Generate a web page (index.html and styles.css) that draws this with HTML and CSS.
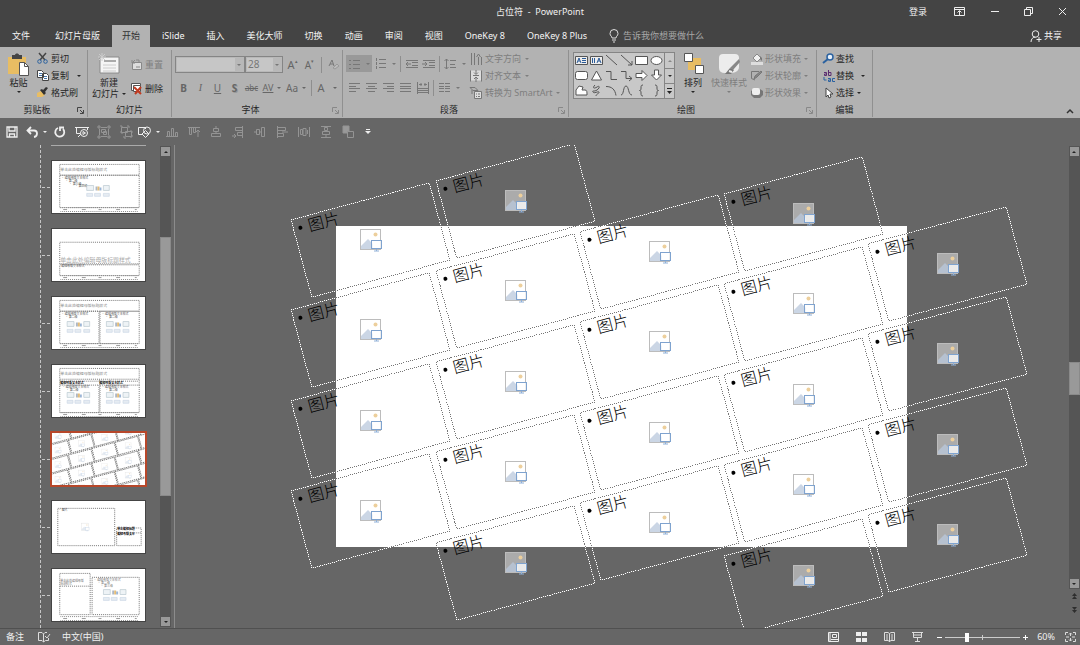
FILE: index.html
```html
<!DOCTYPE html>
<html lang="zh-CN">
<head>
<meta charset="utf-8">
<title>占位符 - PowerPoint</title>
<link rel="stylesheet" href="styles.css">
</head>
<body>
<svg class="defs" aria-hidden="true">
  <symbol id="pic" viewBox="0 0 24 24">
    <rect x="1.500" y="1.500" width="20" height="20" fill="#fff" fill-opacity=".45" stroke="#bcbcbc"/>
    <circle cx="16.500" cy="6.500" r="2" fill="#edcf9c"/>
    <path d="M2 21v-3l7-7 5 5v5z" fill="#b9c8dc" fill-opacity=".75"/>
    <rect x="12.500" y="12.500" width="10" height="8" fill="#fff" fill-opacity=".75" stroke="#7fa3cf"/>
    <path d="M17.500 21v2M15 23h5" stroke="#8fb0d8" fill="none"/>
  </symbol>
  <symbol id="launch" viewBox="0 0 7 7"><path d="M.5 5V.5H5M3 3l3 3M6.500 3v3.500H3" fill="none" stroke="currentColor"/></symbol>
  <symbol id="content" viewBox="0 0 26 14">
    <path d="M1 1h7v5H1zM18 1h6v5h-6z" fill="#eef3f6" stroke="#b8c8ce" stroke-width=".7"/>
    <path d="M10 2h2v4h-2z" fill="#adb7c5"/><path d="M12 2h2v4h-2z" fill="#e5bd77"/><path d="M14 3h2v3h-2z" fill="#9bb5d6"/>
    <path d="M1 9h6v3H1zM9 9h6v3H9zM18 9h6v3h-6z" fill="#e6ecf2" stroke="#ccd8e6" stroke-width=".7"/>
  </symbol>
  <symbol id="foot" viewBox="0 0 80 5"><path d="M0 .5h80M0 4.500h80" stroke="#888" stroke-dasharray="1 1" fill="none"/><path d="M3 2.500h4M22 2.500h4M39 2.500h3M57 2.500h4M76 2.500h2" stroke="#999"/></symbol>
</svg>
<div class="app">
  <header class="titlebar">
    <h1 class="doc-title">占位符&nbsp; -&nbsp; PowerPoint</h1>
    <div class="window-tools">
      <button class="signin">登录</button>
      <button aria-label="功能区显示选项"><svg width="11" height="9" fill="none" stroke="#eee"><path d="M.5.5h10v8H.5zM1 2.500h9M5.500 8V4M3.500 5.500l2-2 2 2"/></svg></button>
      <button aria-label="最小化"><svg width="9" height="9" stroke="#eee"><path d="M1 4.500h8"/></svg></button>
      <button aria-label="还原"><svg width="9" height="9" fill="none" stroke="#eee"><path d="M.5 2.500h6v6h-6zM2.500 2V.5h6v6H7"/></svg></button>
      <button aria-label="关闭"><svg width="9" height="9" stroke="#eee"><path d="M1 1l7 7M8 1L1 8"/></svg></button>
    </div>
  </header>
  <nav class="tabs">
    <button class="tab file">文件</button><button class="tab">幻灯片母版</button><button class="tab active">开始</button><button class="tab">iSlide</button><button class="tab">插入</button><button class="tab">美化大师</button><button class="tab">切换</button><button class="tab">动画</button><button class="tab">审阅</button><button class="tab">视图</button><button class="tab">OneKey 8</button><button class="tab">OneKey 8 Plus</button>
    <button class="tell"><svg width="10" height="14" fill="none" stroke="#ddd"><path d="M3 9C3 7 1 7 1 4.500a4 4 0 0 1 8 0C9 7 7 7 7 9zM3 11h4M4 13h2"/></svg>告诉我你想要做什么</button>
    <button class="share"><svg width="12" height="12" fill="none" stroke="#eee"><circle cx="5.500" cy="4" r="3.300"/><path d="M1 12c0-3 2-5 4.500-5M9 7v5M6.500 9.500h5"/></svg>共享</button>
  </nav>

  <section class="ribbon">
    <div class="group clip">
      <div class="body">
        <button class="big"><svg width="22" height="24"><path d="M0 4h18v17H0z" fill="#e8bd63"/><path d="M4 2h3c0-2 4-2 4 0h3v4H4z" fill="#444"/><path d="M11.500 9.500h5l4 4v9h-9z" fill="#fff" stroke="#555"/><path d="M16.500 9.500v4h4" fill="none" stroke="#555"/></svg><span>粘贴</span><i class="caret"></i></button>
        <div class="rows">
          <button class="item"><svg width="11" height="11" fill="none"><path d="M2 0l6 7M9 0L3 7" stroke="#444" stroke-width="1.500"/><circle cx="2.500" cy="8.500" r="1.800" stroke="#2b62a0"/><circle cx="8.500" cy="8.500" r="1.800" stroke="#2b62a0"/></svg>剪切</button>
          <button class="item"><svg width="11" height="11" fill="#fff" stroke="#444"><path d="M.5.5h4l2 2v5h-6zM5.500 3.500h4l2 2v5h-6z"/><path d="M2 3.500h3M2 5.500h3M7 6.500h3M7 8.500h3" stroke="#4775a8"/></svg>复制<i class="caret far"></i></button>
          <button class="item"><svg width="11" height="11"><path d="M0 6l4-2 4 4-3 2H0z" fill="#e8bd63"/><path d="M3 3l2-1 1 1 3-3 2 1-3 4 1 1-2 2z" fill="#333"/></svg>格式刷</button>
        </div>
      </div>
      <footer class="caption has"><span>剪贴板</span><button aria-label="剪贴板选项" class="launcher"><svg width="7" height="7"><use href="#launch"/></svg></button></footer>
    </div>
    <div class="group slides">
      <div class="body">
        <button class="big"><svg width="22" height="21"><path d="M2 4h19v16H2z" fill="#f5f5f5" stroke="#8a8a8a"/><path d="M6 8h12" stroke="#aaa" stroke-width="2"/><path d="M5 12h13M5 15h13M5 18h13" stroke="#ccc"/><path d="M4 0v8M0 4h8M1 1l6 6M7 1L1 7" stroke="#ccc"/></svg><span>新建</span><span class="line">幻灯片<i class="caret"></i></span></button>
        <div class="rows two">
          <button class="item off"><svg width="11" height="11" fill="#ddd" stroke="#888"><path d="M1.500 3.500h9v7h-9z"/><path d="M5 8h4M1 4l3-3M1 1v3h3M5 1h3v2" fill="none"/></svg>重置</button>
          <button class="item"><svg width="11" height="12" fill="#fff" stroke="#555"><path d="M.5.5h9v7h-9z"/><path d="M2.500 2.500h7v6h-7z"/><path d="M3 4l7 7M10 4l-6 7" stroke="#c03a20" stroke-width="2"/></svg>删除</button>
        </div>
      </div>
      <footer class="caption"><span>幻灯片</span></footer>
    </div>
    <div class="group font">
      <div class="body stack">
        <div class="strip">
          <button class="combo name" aria-label="字体"><span class="value"></span><i class="caret"></i></button><button class="combo size" aria-label="字号"><span class="value">28</span><i class="caret"></i></button>
          <button class="glyph grow">A<sup>▴</sup></button><button class="glyph shrink">A<sup>▾</sup></button><i class="bar"></i>
          <button class="glyph" aria-label="清除格式"><svg width="12" height="12" fill="none" stroke="#777"><path d="M1 7l3-6 2 6M2 5h3"/><path d="M5 9l4-4 2 2-4 3z" fill="#bbb" stroke="#999"/></svg></button>
        </div>
        <div class="strip marks">
          <button class="glyph b">B</button><button class="glyph i">I</button><button class="glyph u">U</button><button class="glyph s">S</button><button class="glyph st">abc</button>
          <button class="glyph av">AV<i class="caret"></i></button><button class="glyph aa">Aa<i class="caret"></i></button><i class="bar"></i><button class="glyph color">A<i class="caret"></i></button>
        </div>
      </div>
      <footer class="caption has"><span>字体</span><button aria-label="字体选项" class="launcher off"><svg width="7" height="7"><use href="#launch"/></svg></button></footer>
    </div>
    <div class="group para">
      <div class="body">
        <div class="stack">
          <div class="strip">
            <button class="tool chosen" aria-label="项目符号"><svg width="11" height="10" stroke="#777"><path d="M0 1.500h2M4 1.500h7M0 5.500h2M4 5.500h7M0 9.500h2M4 9.500h7"/></svg><i class="caret"></i></button>
            <button class="tool wide" aria-label="编号"><svg width="11" height="11" stroke="#777"><path d="M1.500 0v3M4 1.500h7M1.500 4v3M4 5.500h7M1.500 8v3M4 9.500h7"/></svg><i class="caret"></i></button><i class="bar"></i>
            <button class="tool" aria-label="减少缩进"><svg width="13" height="10" stroke="#777" fill="none"><path d="M1 1.500h12M7 3.500h6M7 6.500h6M1 8.500h12M6 5H1M3 3L1 5l2 2"/></svg></button>
            <button class="tool" aria-label="增加缩进"><svg width="13" height="10" stroke="#777" fill="none"><path d="M1 1.500h12M7 3.500h6M7 6.500h6M1 8.500h12M0 5h5M3 3l2 2-2 2"/></svg></button><i class="bar"></i>
            <button class="tool wide" aria-label="行距"><svg width="12" height="12" stroke="#777" fill="none"><path d="M2.500 1v10M.5 3l2-2 2 2M.5 9l2 2 2-2M6 2.500h6M6 6.500h5M6 9.500h6"/></svg><i class="caret"></i></button>
          </div>
          <div class="strip">
            <button class="tool" aria-label="左对齐"><svg width="11" height="9" stroke="#777"><path d="M0 .5h11M0 3.500h7M0 5.500h11M0 8.500h7"/></svg></button>
            <button class="tool" aria-label="居中"><svg width="11" height="9" stroke="#777"><path d="M0 .5h11M2 3.500h7M0 5.500h11M2 8.500h7"/></svg></button>
            <button class="tool" aria-label="右对齐"><svg width="11" height="9" stroke="#777"><path d="M0 .5h11M4 3.500h7M0 5.500h11M4 8.500h7"/></svg></button>
            <button class="tool" aria-label="两端对齐"><svg width="11" height="9" stroke="#777"><path d="M0 .5h11M0 3.500h11M0 5.500h11M0 8.500h11"/></svg></button>
            <button class="tool" aria-label="分散对齐"><svg width="12" height="12" stroke="#777" fill="none"><path d="M.5 0v12M11.500 0v12M2 2.500h3M7 2.500h3M4 1v3M8 1v3M1 6.500h10M1 8.500h10M1 10.500h10"/></svg></button><i class="bar"></i>
            <button class="tool wide" aria-label="分栏"><svg width="11" height="9" stroke="#777"><path d="M0 .5h5M6 .5h5M0 3.500h5M6 3.500h5M0 5.500h5M6 5.500h5M0 8.500h5M6 8.500h5"/></svg><i class="caret"></i></button>
          </div>
        </div>
        <div class="rows">
          <button class="item off"><svg width="12" height="12" fill="none" stroke="#777"><path d="M1.500 0v12M4.500 0v12M8.500 4v8M6.500 4l2-3 2 3M11.500 4v8"/></svg>文字方向<i class="caret"></i></button>
          <button class="item off"><svg width="12" height="12" fill="none" stroke="#777"><path d="M1 .5h10v10H1z" fill="#ddd" stroke="none"/><path d="M.5.5v11M11.500.5v11M3 5.500h6M6 0v4M4 2.500l2 2 2-2M6 12V7M4 9l2-2 2 2"/></svg>对齐文本<i class="caret"></i></button>
          <button class="item off"><svg width="12" height="12" fill="none" stroke="#777"><path d="M0 .5h5l3 3H3zM2 3v4"/><path d="M4.500 4.500h7v7h-7z" fill="#ddd"/><path d="M6 7h1M8 7h2M6 9.500h1M8 9.500h2"/></svg>转换为 SmartArt<i class="caret"></i></button>
        </div>
      </div>
      <footer class="caption has"><span>段落</span><button aria-label="段落选项" class="launcher off"><svg width="7" height="7"><use href="#launch"/></svg></button></footer>
    </div>
    <div class="group draw">
      <div class="body">
        <div class="gallery">
          <div class="shapes">
            <svg width="13" height="13"><path d="M.5 2.500h12v8H.5z" fill="#eee" stroke="#555"/><path d="M2 9l2-5 2 5M3 7h2M7 4.500h4M7 6.500h4M7 8.500h4" fill="none" stroke="#2b5b98"/></svg>
            <svg width="13" height="13"><path d="M.5 2.500h12v8H.5z" fill="#eee" stroke="#555"/><path d="M7 9l2-5 2 5M8 7h2M2.500 4v5M4.500 4v5" fill="none" stroke="#2b5b98"/></svg>
            <svg width="13" height="13"><path d="M1 1l11 10"/></svg>
            <svg width="13" height="13"><path d="M1 1l11 10M8 11h4V7"/></svg>
            <svg width="13" height="13"><path class="w" d="M.5 2.500h12v8H.5z"/></svg>
            <svg width="13" height="13"><ellipse class="w" cx="6.500" cy="6.500" rx="5.500" ry="4"/></svg>
            <svg width="13" height="13"><rect class="w" x=".5" y="2.500" width="12" height="8" rx="2"/></svg>
            <svg width="13" height="13"><path class="w" d="M6.500 2l5 9h-10z"/></svg>
            <svg width="13" height="13"><path d="M1 2.500h5v8h6"/></svg>
            <svg width="13" height="13"><path d="M1 2.500h5v7h6M9 7l3 2.500-3 2.500"/></svg>
            <svg width="13" height="13"><path class="w" d="M1 4.500h6v-3l5 5-5 5v-3H1z"/></svg>
            <svg width="13" height="13"><path class="w" d="M4.500 1h4v5h3l-5 5-5-5h3z"/></svg>
            <svg width="13" height="13"><path class="w" d="M1 11V6l3-4 4 1-1 3h3c2 0 2 2 2 5z"/></svg>
            <svg width="13" height="13"><path d="M5 1C2 4 4 5 7 3s3 1 0 3-5 0-4 2 5-1 6 0-3 2-3 4"/></svg>
            <svg width="13" height="13"><path d="M1 2.500c6 0 9 3 10 9"/></svg>
            <svg width="13" height="13"><path d="M1 11c3 0 2-9 5-9s2 9 6 9"/></svg>
            <svg width="13" height="13"><path d="M8 1c-2 0-2 1-2 3s0 2-1.500 2.500c1.500.5 1.500.5 1.500 2.500s0 3 2 3"/></svg>
            <svg width="13" height="13"><path d="M5 1c2 0 2 1 2 3s0 2 1.500 2.500c-1.500.5-1.500.5-1.500 2.500s0 3-2 3"/></svg>
          </div>
          <div class="spin"><button aria-label="上一行"><i class="caret up dim"></i></button><button aria-label="下一行"><i class="caret"></i></button><button aria-label="更多形状"><svg width="5" height="6"><path d="M0 .5h5" stroke="#222"/><path d="M0 3h5L2.500 6z" fill="#222"/></svg></button></div>
        </div>
        <button class="big arrange"><svg width="21" height="22"><path d="M5 5h13v12H5z" fill="#e8bd63"/><path d="M1.500.5h8v8h-8zM12.500 12.500h8v8h-8z" fill="#fff" stroke="#555"/></svg><span>排列</span><i class="caret"></i></button>
        <button class="big style off"><svg width="22" height="22"><path d="M5 1h12q4 0 4 4v9q0 5-7 6H7q-6 0-6-5V5q0-4 4-4z" fill="#ececec"/><path d="M21 6l1 3-7 8-3-2z" fill="#888"/><path d="M7 21l5-6 4 2-3 4z" fill="#777"/><path d="M11 18l3 1" stroke="#eee" stroke-width="2"/></svg><span>快速样式</span><i class="caret"></i></button>
        <div class="rows">
          <button class="item off"><svg width="12" height="12"><path d="M2 5l4-4 4 4-4 4z" fill="#f0f0f0" stroke="#888"/><path d="M9 3l2 2v3l-2-2z" fill="#777"/><path d="M0 9h12v3H0z" fill="#ddd"/></svg>形状填充<i class="caret"></i></button>
          <button class="item off"><svg width="12" height="12" fill="none" stroke="#777"><path d="M8 1.500H.5v7L4 10"/><path d="M3 9l1-3 6-5 1 1-5 5z" fill="#888"/></svg>形状轮廓<i class="caret"></i></button>
          <button class="item off"><svg width="12" height="12"><path d="M3 2h6l3 2v4l-3 3H3L0 8V4z" fill="#777"/><rect x="1" y="1" width="8" height="7" rx="2" fill="#eee"/></svg>形状效果<i class="caret"></i></button>
        </div>
      </div>
      <footer class="caption has"><span>绘图</span><button aria-label="绘图选项" class="launcher off"><svg width="7" height="7"><use href="#launch"/></svg></button></footer>
    </div>
    <div class="group edit">
      <div class="body">
        <div class="rows">
          <button class="item"><svg width="11" height="11" fill="none"><circle cx="7" cy="4" r="3" fill="#e8f1fa" stroke="#2b62a0" stroke-width="1.500"/><path d="M5 6l-5 4" stroke="#2b62a0" stroke-width="2"/></svg>查找</button>
          <button class="item"><svg width="11" height="12" fill="none" stroke="#5b2c70"><path d="M3.500 5.500V2.500H1M3.500 4H1.500v1.500h2M5.500 0v5.500h2.500v-3H5.500"/><path d="M7.500 11.500v-3H5M7.500 10H5.500v1.500h2M12 8.500H9.500v3H12M1 7v3h2.500" stroke="#2b62a0"/></svg>替换<i class="caret far"></i></button>
          <button class="item"><svg width="11" height="12"><path d="M3 1v9l2-2 1 3 2-1-1-3h3z" fill="#fff" stroke="#444"/></svg>选择<i class="caret"></i></button>
        </div>
      </div>
      <footer class="caption"><span>编辑</span></footer>
    </div>
    <button class="collapse" aria-label="折叠功能区"><svg width="8" height="5" fill="none" stroke="#333" stroke-width="1.500"><path d="M1 4l3-3 3 3"/></svg></button>
  </section>

  <div class="quick">
    <button aria-label="保存"><svg width="12" height="12" fill="none" stroke="#eee"><path d="M1 1h10v10H1zM3 1v4h6V1M3.500 11V8h5v3" stroke-width="1.300"/></svg></button>
    <button class="w26" aria-label="撤消"><svg width="13" height="12" fill="none" stroke="#eee" stroke-width="1.800"><path d="M5 1L1.500 4.500 5 8M2 4.500h6c4 0 4 6 0 6.500"/></svg><i class="caret"></i></button>
    <button aria-label="重复"><svg width="12" height="12" fill="none" stroke="#eee" stroke-width="1.800"><path d="M4 2a4.500 4.500 0 1 0 5 1M6 5V1.500h4"/></svg></button>
    <button aria-label="放映"><svg width="14" height="12" fill="none" stroke="#eee"><path d="M0 1.500h14M1.500 2v5.500H5M3 11l3-3M12.500 2v2"/><circle cx="9" cy="7" r="3.500"/><path d="M8 5.500v3l2.500-1.500z"/></svg></button>
    <button class="dim" aria-label="组合"><svg width="12" height="12" fill="none"><path d="M1.500 3v6M10.500 3v6M3 1.500h6M3 10.500h6M0 0h2v2H0zM10 0h2v2h-2zM0 10h2v2H0zM10 10h2v2h-2zM3.500 3.500h4v3h-4zM5.500 5.500h3v3h-3z"/></svg></button>
    <button class="dim" aria-label="取消组合"><svg width="13" height="12" fill="none"><path d="M1.500 1.500h6v5h-6zM5.500 5.500h6v5h-6zM0 0h2v2M7 0h2v2M0 6h2v2M11 4v2h2M4 10v2h2M11 12v-2h2"/></svg></button>
    <button class="w24" aria-label="形状"><svg width="14" height="12" fill="none" stroke="#eee"><path d="M4 8.500H.5v-7h7V3"/><circle cx="9" cy="4.500" r="3.500"/><path d="M7.500 4.500l3.500 3.500-3.500 3.500L4 8z"/></svg><i class="caret"></i></button>
    <button class="dim" aria-label="底端对齐"><svg width="12" height="12" fill="none"><path d="M0 10.500h12M1.500 5.500h2v5h-2zM5.500 2.500h2v8h-2zM9.500 6.500h2v4h-2z"/></svg></button>
    <button class="dim" aria-label="顶端对齐"><svg width="12" height="12" fill="none"><path d="M0 1.500h12M1.500 1.500h2v7h-2zM5.500 1.500h2v5h-2zM10 11V4M8 6l2-2 2 2"/></svg></button>
    <button class="dim" aria-label="水平居中"><svg width="12" height="12" fill="none"><path d="M3.500 2.500h5v3h-5zM1.500 7.500h9v3h-9zM6 0v2M6 5v2"/></svg></button>
    <button class="dim" aria-label="右对齐"><svg width="12" height="12" fill="none"><path d="M10.500 0v12M3.500 1.500h7v3h-7zM5.500 6.500h5v3h-5zM0 10h4M2 8l2 2-2 2"/></svg></button>
    <button class="dim" aria-label="垂直居中"><svg width="12" height="12" fill="none"><path d="M0 6h2M6 6h1M2.500 3.500h3v5h-3zM7.500 1.500h3v9h-3z"/></svg></button>
    <button class="dim" aria-label="左对齐"><svg width="12" height="12" fill="none"><path d="M1.500 0v12M1.500 1.500h8v3h-8zM1.500 7.500h6v3h-6zM12 6H6"/></svg></button>
    <button class="dim" aria-label="横向分布"><svg width="12" height="12" fill="none"><path d="M.5 1v10M11.500 1v10M2.500 3.500h2v5h-2zM5 2.500h3v7H5zM9.500 4v4"/></svg></button>
    <button class="dim" aria-label="纵向分布"><svg width="12" height="12" fill="none"><path d="M1 .5h10M1 11.500h10M4.500 1.500h3v3h-3zM2.500 5.500h7v3h-7zM6 8v3"/></svg></button>
    <button class="dim" aria-label="下移一层"><svg width="13" height="12"><path d="M1 0h6v7H1z" fill="#999"/><path d="M5.500 5.500h6v6h-6z" fill="#666"/></svg></button>
    <button class="last" aria-label="自定义快速访问工具栏"><svg width="6" height="6"><path d="M1 .5h4" stroke="#eee"/><path d="M0 2h6L3 5z" fill="#eee"/></svg></button>
  </div>

  <main class="main">
    <aside class="panel">
      <div class="thumbs" id="thumbs">
        <button class="thumb tail" aria-label="版式"></button>
        <button class="thumb"><svg viewBox="0 0 94 53"><rect class="d" x="7.500" y="3.500" width="81" height="11"/><rect class="d" x="7.500" y="14.500" width="81" height="33"/><text x="8" y="10" class="t4">单击此处编辑母版标题样式</text><text x="9" y="18" class="t2">• 编辑母版文本样式</text><text x="13" y="21" class="t2">• 第二级</text><text x="17" y="24" class="t2">• 第三级</text><text x="23" y="27" class="t2">• 第四级</text><use href="#content" x="34" y="24" width="26" height="14"/><use href="#foot" x="8" y="47" width="80" height="5"/></svg></button>
        <button class="thumb"><svg viewBox="0 0 94 53"><rect class="d" x="7.500" y="13.500" width="81" height="22"/><rect class="d" x="7.500" y="36.500" width="81" height="11"/><text x="8" y="34" class="t6">单击此处编辑母版标题样式</text><text x="9" y="39" class="t2">编辑母版文本样式</text><use href="#foot" x="8" y="47" width="80" height="5"/></svg></button>
        <button class="thumb"><svg viewBox="0 0 94 53"><rect class="d" x="7.500" y="3.500" width="81" height="11"/><rect class="d" x="7.500" y="14.500" width="40" height="33"/><rect class="d" x="48.500" y="14.500" width="40" height="33"/><text x="8" y="10" class="t4">单击此处编辑母版标题样式</text><text x="9" y="18" class="t2">• 编辑母版文本样式</text><text x="13" y="21" class="t2">• 第二级</text><text x="50" y="18" class="t2">• 编辑母版文本样式</text><text x="54" y="21" class="t2">• 第二级</text><use href="#content" x="14" y="24" width="26" height="14"/><use href="#content" x="54" y="24" width="26" height="14"/><use href="#foot" x="8" y="47" width="80" height="5"/></svg></button>
        <button class="thumb"><svg viewBox="0 0 94 53"><rect class="d" x="7.500" y="3.500" width="81" height="11"/><rect class="d" x="7.500" y="20.500" width="40" height="28"/><rect class="d" x="48.500" y="20.500" width="40" height="28"/><path class="d" d="M7.500 15v6M88.500 15v6M48 15v6M8 16.500h80"/><text x="8" y="10" class="t4">单击此处编辑母版标题样式</text><text x="8" y="19" class="t2 k">编辑母版文本样式</text><text x="48" y="19" class="t2 k">编辑母版文本样式</text><text x="10" y="23" class="t2">• 编辑母版文本样式</text><text x="14" y="27" class="t2">• 第二级</text><text x="50" y="23" class="t2">• 编辑母版文本样式</text><text x="54" y="27" class="t2">• 第二级</text><use href="#content" x="14" y="27" width="26" height="14"/><use href="#content" x="54" y="27" width="26" height="14"/><use href="#foot" x="8" y="48" width="80" height="5"/></svg></button>
        <button class="thumb picked" aria-label="图片版式"><svg viewBox="0 0 571 321" id="mini"></svg></button>
        <button class="thumb"><svg viewBox="0 0 94 53"><rect class="d" x="5.500" y="7.500" width="58" height="38"/><rect class="d" x="65.500" y="27.500" width="25" height="18"/><path class="d" d="M65 32.500h26"/><text x="6" y="10" class="t2">• 图片</text><use href="#pic" x="29" y="22" width="9" height="9" opacity=".5"/><text x="66" y="30" class="t3 k">单击编辑标题</text><text x="66" y="35" class="t2 k">编辑母版文本</text></svg></button>
        <button class="thumb"><svg viewBox="0 0 94 53"><path class="d" d="M7.500 4.500h31v42h-31zM8 17.500h31M40.500 8.500h48v38h-48z"/><text x="8" y="13" class="t3">单击此处编辑母版</text><text x="8" y="16" class="t3">标题样式</text><text x="42" y="12" class="t3">• 编辑母版文本样式</text><text x="46" y="15" class="t3">• 第二级</text><text x="49" y="18" class="t3">• 第三级</text><use href="#content" x="51" y="20" width="26" height="14"/><use href="#foot" x="8" y="48" width="80" height="5"/></svg></button>
      </div>
      <div class="scroll"><button aria-label="向上"><i class="caret up"></i></button><div class="track left"><div class="grip"></div></div><button aria-label="向下"><i class="caret"></i></button></div>
    </aside>
    <section class="workspace"><div class="slide" id="slide"></div></section>
    <div class="rail">
      <div class="scroll"><button aria-label="向上"><i class="caret up"></i></button><div class="track right"><div class="grip"></div></div><button aria-label="向下"><i class="caret"></i></button></div>
      <button class="page" aria-label="上一张"><svg width="5" height="6" fill="#2e2e2e"><path d="M0 3l2.500-3L5 3zM0 6l2.500-3L5 6z"/></svg></button>
      <button class="page" aria-label="下一张"><svg width="5" height="6" fill="#2e2e2e"><path d="M0 0h5L2.500 3zM0 3h5L2.500 6z"/></svg></button>
    </div>
  </main>

  <footer class="status">
    <button class="note">备注</button>
    <button class="spell" aria-label="拼写检查"><svg width="12" height="11" fill="none" stroke="#ddd"><path d="M5.500 10V2L4 .5H.5v8H4L5.500 10l2-1.500h3V6M5.500 2L7 .5h2M7 4l2 2 3-4"/></svg></button>
    <button>中文(中国)</button>
    <div class="views">
      <button aria-label="普通视图"><svg width="11" height="10" fill="none" stroke="#eee"><path d="M.5.5h10v9H.5zM2 1v8" /><path d="M4.500 2.500h4v3h-4zM3 7.500h7"/></svg></button>
      <button aria-label="幻灯片浏览"><svg width="11" height="10" fill="#eee"><path d="M0 0h5v4H0zM6 0h5v4H6zM0 6h5v4H0zM6 6h5v4H6z"/></svg></button>
      <button aria-label="阅读视图"><svg width="11" height="10" fill="none" stroke="#ddd"><path d="M5.500 10V1.500L4 .5H.5v8H4l1.500 1 1.500-1h3.500v-8H7l-1.500 1M2 3h2M2 5h2M2 7h2M7 3h2M7 5h2M7 7h2"/></svg></button>
      <button aria-label="幻灯片放映"><svg width="11" height="10" fill="none" stroke="#ddd"><path d="M0 .5h11M1.500 1v4.500h8V1M5.500 6v3M3 9.500h5M2 3h7"/></svg></button>
    </div>
    <button class="sign" aria-label="缩小"><svg width="5" height="5" stroke="#fff"><path d="M0 2.500h5"/></svg></button>
    <input class="zoom" type="range" min="0" max="100" value="28" aria-label="缩放">
    <button class="sign" aria-label="放大"><svg width="5" height="5" stroke="#fff"><path d="M0 2.500h5M2.500 0v5"/></svg></button>
    <button class="percent">60%</button>
    <button class="fit" aria-label="适应窗口"><svg width="11" height="10" fill="none" stroke="#ddd"><path d="M.5 3V.5H3M8 .5h2.500V3M10.500 7v2.500H8M3 9.500H.5V7M5.500 1v3M4 2.500L5.500 1 7 2.500M5.500 9V6M4 7.500L5.500 9 7 7.500M1 5h3M10 5H7"/></svg></button>
  </footer>
</div>
<script src="canvas.js"></script>
</body>
</html>
```
FILE: styles.css
```css
* { box-sizing: border-box; }
body { margin: 0; background: #666; color: #262626; font: 9px/12px "Noto Sans", "Noto Sans CJK SC", sans-serif; }
button { display: flex; align-items: center; justify-content: center; flex: none; margin: 0; padding: 0; border: 0; background: none; color: inherit; font: inherit; white-space: nowrap; }
svg { display: block; flex: none; overflow: visible; }
.defs { position: absolute; width: 0; height: 0; }
.app { display: flex; flex-direction: column; height: 100vh; }
.caret { flex: none; width: 0; height: 0; border: 2px solid transparent; border-top-color: currentColor; border-bottom-width: 0; }
.caret.up { border-top-width: 0; border-bottom: 2px solid currentColor; }
.caret.dim { opacity: .4; }

.titlebar { display: grid; grid-template-columns: 1fr auto 1fr; align-items: center; height: 23px; background: #444; color: #f0f0f0; }
.doc-title { grid-column: 2; margin: 0; font: inherit; }
.window-tools { display: flex; justify-content: flex-end; align-items: center; gap: 25px; padding-right: 13px; }
.window-tools .signin { margin-right: 2px; }

.tabs { display: flex; align-items: stretch; gap: 2px; height: 24px; padding: 2px 18px 0 2px; background: #444; color: #f4f4f4; }
.tab { padding: 0 10px; }
.tab.file { margin-right: 3px; }
.tab.active { background: #b2b2b2; color: #333; }
.tell { gap: 4px; margin-left: 10px; color: #a8a8a8; }
.share { gap: 2px; margin-left: auto; }

.ribbon { display: flex; height: 71px; padding: 3px 6px 1px 0; background: #b2b2b2; }
.group { display: flex; flex-direction: column; flex: none; border-right: 1px solid #909090; }
.body { display: flex; align-items: flex-start; flex: 1; }
.caption { display: flex; align-items: center; justify-content: center; position: relative; height: 14px; }
.caption.has { padding-right: 13px; }
.launcher { position: absolute; right: 3px; top: 4px; color: #444; }
.launcher.off { color: #888; }
.off { color: #7e7e7e; }
.big { flex-direction: column; justify-content: flex-start; padding-top: 3px; line-height: 11px; }
.big span { margin-top: 2px; }
.big .caret { margin-top: 3px; }
.big .line { display: flex; align-items: center; gap: 3px; margin-top: 0; }
.big .line .caret { margin-top: 0; }
.rows { display: flex; flex-direction: column; }
.item { justify-content: flex-start; gap: 3px; height: 17px; }
.item .caret { margin-left: 1px; }
.item .caret.far { margin-left: 5px; }
.rows.two { gap: 7px; padding-top: 6px; }
.strip { display: flex; align-items: center; height: 17px; }
.stack { display: flex; flex-direction: column; align-items: stretch; gap: 6px; }
.bar { width: 1px; height: 16px; background: #8e8e8e; }

.clip { width: 88px; }
.clip .body { gap: 7px; padding-left: 7px; }
.clip .big { width: 23px; }
.clip .big span { margin-top: 0; }
.slides { width: 84px; }
.slides .body { gap: 4px; padding-left: 3px; }
.slides .big { width: 36px; }
.slides .big span:first-of-type { margin-top: 3px; }

.font { width: 171px; }
.font .body { padding: 6px 0 0 3px; }
.combo { justify-content: space-between; height: 17px; padding: 1px 3px 1px 1px; border: 1px solid #858585; background: #b8b8b8; color: #777; }
.combo .value { height: 13px; padding-left: 1px; background: #c6c6c6; text-align: left; }
.combo.name { width: 70px; }
.combo.name .value { width: 58px; }
.combo.size { width: 38px; }
.combo.size .value { width: 26px; font-size: 10px; }
.glyph { width: 17px; color: #666; font-size: 10px; }
.glyph sup { font-size: 5px; line-height: 5px; align-self: flex-start; }
.glyph.grow { margin-left: 1px; font-size: 11px; }
.font .bar { margin: 0 3px; }
.b { font-weight: 700; }
.i { font-family: "Liberation Serif", serif; font-style: italic; }
.u { text-decoration: underline; }
.s { font-weight: 700; text-shadow: 1px 1px #999; }
.st { font-size: 8px; text-decoration: line-through; }
.av, .aa { width: 24px; gap: 4px; }
.av { text-decoration: underline; font-size: 9px; }
.color { width: 24px; gap: 8px; font-size: 11px; }

.para { width: 226px; }
.para .body { padding-left: 3px; }
.para .stack { width: 122px; padding-top: 5px; gap: 7px; }
.para .rows { padding-left: 2px; }
.tool { gap: 6px; width: 17px; height: 17px; color: #777; }
.tool.chosen { width: 26px; background: #999; }
.tool.wide { width: 26px; }
.para .bar { margin: 0 2px; }

.draw { width: 248px; }
.draw .body { padding-left: 4px; }
.gallery { display: flex; height: 47px; margin-top: 2px; border: 1px solid #858585; background: #c8c8c8; }
.shapes { display: grid; grid-template-columns: repeat(6, 13px); gap: 2px; padding: 1px; }
.shapes svg { fill: none; stroke: #555; }
.shapes .w { fill: #fff; }
.spin { display: grid; grid-template-rows: repeat(3, 15px); width: 10px; border-left: 1px solid #858585; }
.spin button + button { border-top: 1px solid #858585; }
.arrange { width: 36px; }
.style { width: 36px; }
.draw .rows { padding-left: 4px; }
.draw .item { gap: 2px; }
.edit { width: 56px; }
.edit .body { padding-left: 6px; }
.edit .item { gap: 2px; }
.collapse { align-self: flex-end; margin-left: auto; padding-bottom: 3px; }

.quick { display: flex; align-items: center; height: 27px; padding-left: 1px; color: #eee; }
.quick button { gap: 4px; width: 22px; height: 20px; }
.quick .w26 { width: 26px; }
.quick .w24 { width: 24px; }
.quick .last { width: 18px; }
.quick .dim svg { stroke: #949494; }

.main { display: flex; flex: 1; min-height: 0; }
.panel { display: flex; justify-content: space-between; flex: none; width: 175px; padding-right: 3px; border-right: 1px solid #8c8c8c; }
.thumbs { display: flex; flex-direction: column; gap: 14px; width: 108px; margin-left: 40px; padding-left: 10px; overflow: clip; border-left: 1px dashed #c6c6c6; }
.thumb { position: relative; width: 95px; height: 54px; border: 1px solid #444; background: #fff; }
.thumb svg { width: 93px; height: 52px; }
.thumb.tail { height: 1px; border: 0; background: #aaa; }
.thumb:not(.tail)::before { content: ""; position: absolute; left: -10px; top: 26px; width: 8px; border-top: 1px dashed #c6c6c6; }
.thumb.picked { box-shadow: 0 0 0 1px #b7472a; border-color: #b7472a; }
.picked svg { overflow: hidden; }
.d { fill: none; stroke: #777; stroke-dasharray: 1 1; }
.t2, .t3, .t4, .t6 { fill: #888; font: 3px/3px "Noto Sans CJK SC", sans-serif; }
.t2 { fill: #555; }
.t3 { fill: #777; }
.t4 { font-size: 4px; }
.t6 { font-size: 6px; fill: #aaa; }
.k { fill: #000; font-weight: 700; }
.scroll { display: flex; flex-direction: column; flex: 1; }
.panel .scroll { flex: none; width: 11px; padding: 1px 0; }
.scroll button { width: 11px; height: 11px; background: #999; border: 1px solid #555; color: #222; }
.track { display: flex; flex-direction: column; flex: 1; background: #555; }
.track::before { content: ""; }
.track.left::before { flex: 80; }
.track.left::after { content: ""; flex: 120; }
.track.left .grip { flex: 258; }
.track.right::before { flex: 206; }
.track.right::after { content: ""; flex: 184; }
.track.right .grip { flex: 31; }
.grip { background: #999; border: 1px solid #8a8a8a; }
.workspace { display: flex; align-items: center; justify-content: center; flex: 1; min-width: 0; overflow: hidden; }
.slide { position: relative; flex: none; width: 571px; height: 321px; background: #fff; }
.node { position: absolute; width: 143px; height: 80px; margin: -40px 0 0 -71px; }
.frame { position: absolute; inset: 0; transform: rotate(-15deg); }
.frame svg { position: absolute; inset: 0; fill: none; shape-rendering: crispEdges; }
.frame .base { stroke: #777; }
.frame .dots { stroke: #fff; stroke-dasharray: 1 1; }
.label { display: flex; align-items: center; gap: 6px; padding-left: 5px; color: #000; font: 300 16px/19px "Noto Sans CJK SC", sans-serif; }
.label::before { content: ""; width: 4px; height: 4px; border-radius: 50%; background: #000; }
.pic { position: absolute; left: 60px; top: 28px; }
.rail { display: flex; flex-direction: column; flex: none; align-items: center; width: 12px; padding: 1px 0 11px; }
.rail .page { height: 14px; }

.status { display: flex; align-items: center; height: 17px; padding: 0 4px 0 6px; border-top: 1px solid #505050; color: #f0f0f0; }
.spell { margin: 0 12px 0 14px; }
.views { display: flex; gap: 17px; margin: 0 14px 0 auto; }
.zoom { width: 75px; height: 9px; margin: 0 3px; appearance: none; background: linear-gradient(#ccc, #ccc) center / 100% 1px no-repeat, linear-gradient(#ccc, #ccc) center / 1px 5px no-repeat; }
.zoom::-webkit-slider-thumb { appearance: none; width: 4px; height: 9px; background: #fff; }
.percent { margin: 0 10px 0 9px; }
```
FILE: canvas.js
```javascript
const columns = [
  { x: 34, y: 14, count: 4 },
  { x: 179, y: -25, count: 5 },
  { x: 323, y: 26, count: 4 },
  { x: 467, y: -12, count: 5 },
  { x: 611, y: 38, count: 4 }
];
const nodes = [];
const mini = [];
for (const c of columns) {
  for (let i = 0; i < c.count; i++) {
    const y = c.y + Math.floor(i * 90.5);
    nodes.push(`<div class="node" style="left:${c.x}px;top:${y}px"><div class="frame"><svg width="143" height="80"><rect class="base" x="0" y="0" width="143" height="80"/><rect class="dots" x="0" y="0" width="143" height="80"/></svg><div class="label">图片</div></div><svg class="pic" width="24" height="24"><use href="#pic"/></svg></div>`);
    mini.push(`<g transform="translate(${c.x} ${y})"><rect x="-71" y="-40" width="143" height="80" transform="rotate(-15)" fill="none" stroke="#777" stroke-width="6" stroke-dasharray="8 5"/><use href="#pic" x="-20" y="-20" width="44" height="44" opacity=".5"/></g>`);
  }
}
document.getElementById("slide").innerHTML = nodes.join("");
document.getElementById("mini").innerHTML = mini.join("");
```
